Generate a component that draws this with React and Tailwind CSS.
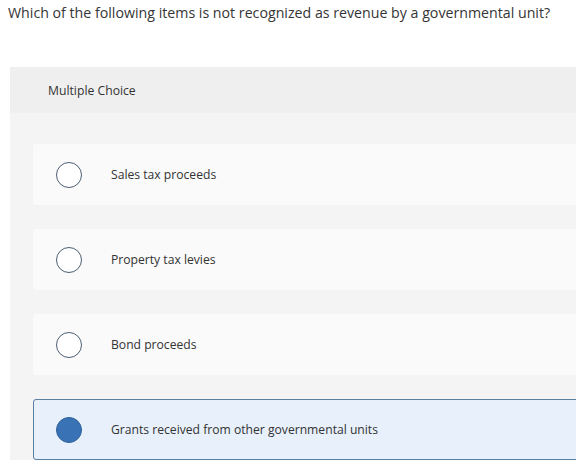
import React from "react";

const options = [
  { text: "Sales tax proceeds", selected: false },
  { text: "Property tax levies", selected: false },
  { text: "Bond proceeds", selected: false },
  { text: "Grants received from other governmental units", selected: true },
];

export default function App() {
  return (
    <div className="w-[576px] h-[468px] overflow-hidden bg-white text-[#333]" style={{ fontFamily: "'Open Sans', sans-serif" }}>
      <div className="pl-[8px] pt-[3px] h-[67px] text-[14.2px] leading-[20px] text-[#353535] whitespace-nowrap">
        Which of the following items is not recognized as revenue by a governmental unit?
      </div>
      <div className="ml-[10px] w-[640px] bg-[#f4f4f4]">
        <div className="h-[46px] bg-[#efefef] flex items-center pl-[38px] pt-[2px] text-[12.2px] text-[#333]">
          Multiple Choice
        </div>
        <div className="pt-[31px] pl-[23px] flex flex-col gap-[24px]">
          {options.map((o) => (
            <div
              key={o.text}
              className={
                o.selected
                  ? "h-[61px] rounded-[3px] border border-[#5b7ea3] bg-[#e8f1fb] flex items-center pl-[22px]"
                  : "h-[61px] rounded-[3px] border border-transparent bg-[#fafafa] flex items-center pl-[22px]"
              }
            >
              {o.selected ? (
                <div className="w-[26px] h-[26px] rounded-full bg-[#3a73b5] border border-[#2d5f99]" />
              ) : (
                <div className="w-[26px] h-[26px] rounded-full border-[1.5px] border-[#4d5e70] bg-white" />
              )}
              <div className="ml-[29px] pt-[2px] text-[12.15px] text-[#333]">{o.text}</div>
            </div>
          ))}
        </div>
      </div>
    </div>
  );
}
